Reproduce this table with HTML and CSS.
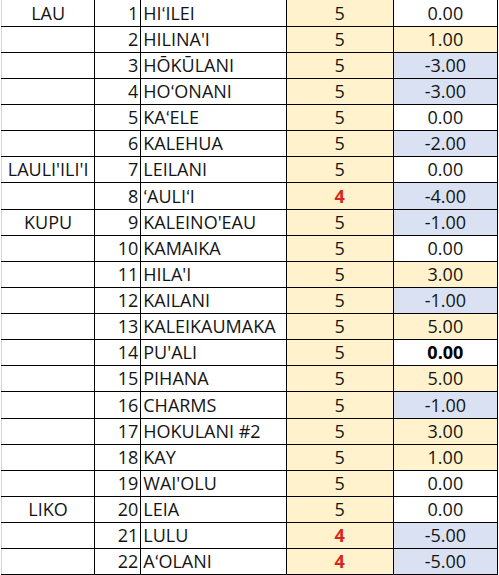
FILE: index.html
```html
<!DOCTYPE html>
<html>
<head>
<meta charset="utf-8">
<link rel="stylesheet" href="styles.css">
</head>
<body>
<table class="sheet">
<colgroup><col class="c1"><col class="c2"><col class="c3"><col class="c4"><col class="c5"></colgroup>
<tbody>
<tr class="first"><td class="grp">LAU</td><td class="num">1</td><td class="name">HIʻILEI</td><td class="score">5</td><td class="val">0.00</td></tr>
<tr><td class="grp"></td><td class="num">2</td><td class="name">HILINA'I</td><td class="score">5</td><td class="val pos">1.00</td></tr>
<tr><td class="grp"></td><td class="num">3</td><td class="name">HŌKŪLANI</td><td class="score">5</td><td class="val neg">-3.00</td></tr>
<tr><td class="grp"></td><td class="num">4</td><td class="name">HOʻONANI</td><td class="score">5</td><td class="val neg">-3.00</td></tr>
<tr><td class="grp"></td><td class="num">5</td><td class="name">KAʻELE</td><td class="score">5</td><td class="val">0.00</td></tr>
<tr><td class="grp"></td><td class="num">6</td><td class="name">KALEHUA</td><td class="score">5</td><td class="val neg">-2.00</td></tr>
<tr><td class="grp">LAULI'ILI'I</td><td class="num">7</td><td class="name">LEILANI</td><td class="score">5</td><td class="val">0.00</td></tr>
<tr class="tall"><td class="grp"></td><td class="num">8</td><td class="name">ʻAULIʻI</td><td class="score low">4</td><td class="val neg">-4.00</td></tr>
<tr><td class="grp">KUPU</td><td class="num">9</td><td class="name">KALEINO'EAU</td><td class="score">5</td><td class="val neg">-1.00</td></tr>
<tr><td class="grp"></td><td class="num">10</td><td class="name">KAMAIKA</td><td class="score">5</td><td class="val">0.00</td></tr>
<tr><td class="grp"></td><td class="num">11</td><td class="name">HILA'I</td><td class="score">5</td><td class="val pos">3.00</td></tr>
<tr><td class="grp"></td><td class="num">12</td><td class="name">KAILANI</td><td class="score">5</td><td class="val neg">-1.00</td></tr>
<tr><td class="grp"></td><td class="num">13</td><td class="name">KALEIKAUMAKA</td><td class="score">5</td><td class="val pos">5.00</td></tr>
<tr><td class="grp"></td><td class="num">14</td><td class="name">PU'ALI</td><td class="score">5</td><td class="val bold">0.00</td></tr>
<tr><td class="grp"></td><td class="num">15</td><td class="name">PIHANA</td><td class="score">5</td><td class="val pos">5.00</td></tr>
<tr class="tall"><td class="grp"></td><td class="num">16</td><td class="name">CHARMS</td><td class="score">5</td><td class="val neg">-1.00</td></tr>
<tr><td class="grp"></td><td class="num">17</td><td class="name">HOKULANI #2</td><td class="score">5</td><td class="val pos">3.00</td></tr>
<tr><td class="grp"></td><td class="num">18</td><td class="name">KAY</td><td class="score">5</td><td class="val pos">1.00</td></tr>
<tr><td class="grp"></td><td class="num">19</td><td class="name">WAI'OLU</td><td class="score">5</td><td class="val">0.00</td></tr>
<tr><td class="grp">LIKO</td><td class="num">20</td><td class="name">LEIA</td><td class="score">5</td><td class="val">0.00</td></tr>
<tr><td class="grp"></td><td class="num">21</td><td class="name">LULU</td><td class="score low">4</td><td class="val neg">-5.00</td></tr>
<tr><td class="grp"></td><td class="num">22</td><td class="name">AʻOLANI</td><td class="score low">4</td><td class="val neg">-5.00</td></tr>
</tbody>
</table>
</body>
</html>
```
FILE: styles.css
```css
html, body {
  margin: 0;
  padding: 0;
  background: #ffffff;
}
body {
  font-family: "Open Sans", Lato, sans-serif;
  font-size: 18px;
  color: #141414;
}
.sheet {
  border-collapse: collapse;
  table-layout: fixed;
  width: 497px;
  margin-left: 1px;
}
.c1 { width: 93px; }
.c2 { width: 46px; }
.c3 { width: 145px; }
.c4 { width: 107px; }
.c5 { width: 104px; }
.sheet td {
  height: 25px;
  padding: 0;
  border: 1px solid #000;
  line-height: 25px;
  white-space: nowrap;
  overflow: hidden;
}
.sheet tr.first td {
  border-top: none;
  height: 26px;
}
.sheet tr.tall td {
  height: 26px;
}
.sheet td.grp {
  border-left: 1px solid #d4d4d4;
  text-align: center;
}
.sheet td.num {
  text-align: right;
  padding-right: 2px;
}
.sheet td.name {
  text-align: left;
  padding-left: 2px;
}
.sheet td.score {
  background: #fff2cc;
  text-align: center;
}
.sheet td.score.low {
  color: #d8261c;
  font-weight: 700;
}
.sheet td.val {
  text-align: center;
}
.sheet td.val.pos { background: #fff2cc; }
.sheet td.val.neg { background: #d9e1f2; }
.sheet td.val.bold { font-weight: 700; color: #000; }
```
